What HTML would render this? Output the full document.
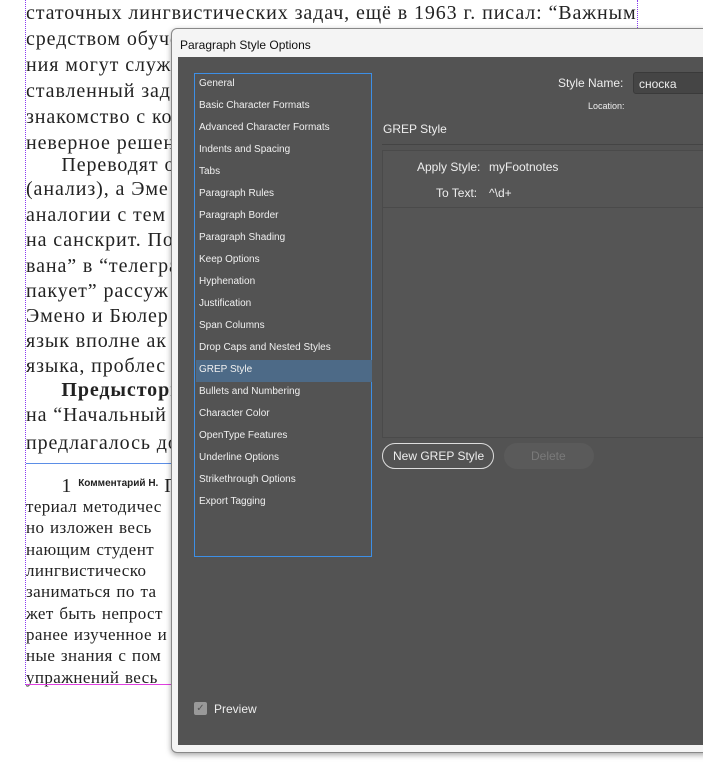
<!DOCTYPE html>
<html><head><meta charset="utf-8"><style>
*{margin:0;padding:0;box-sizing:border-box}
body{width:703px;height:763px;background:#fff;position:relative;overflow:hidden;font-family:"Liberation Sans",sans-serif}
.doc{position:absolute;left:26px;top:0;font-family:"Liberation Serif","DejaVu Serif",serif;color:#222}
.l{position:absolute;left:0;white-space:nowrap;font-size:20px;line-height:20px;letter-spacing:0.9px}
.f{position:absolute;left:0;white-space:nowrap;font-size:17px;line-height:17px;letter-spacing:0.4px;word-spacing:1px}
.vl{position:absolute;left:25px;top:0;height:685px;border-left:1px dotted #8a3cf0}
.dlg{position:absolute;left:171px;top:28px;width:540px;height:725px;background:#f4f4f4;border:1px solid #888;border-radius:6px;box-shadow:0 2px 6px rgba(0,0,0,.35)}
.title{position:absolute;left:8px;top:9px;font-size:12px;color:#111}
.body{position:absolute;left:178px;top:57px;width:525px;height:688px;background:#535353}
.list{position:absolute;left:194px;top:73px;width:178px;height:484px;border:1px solid #3d8fe6;background:#535353}
.it{position:absolute;left:4px;font-size:10px;color:#f0f0f0}
.sel{position:absolute;left:1px;width:176px;height:22px;top:286px;background:#4d6a87}
.t{position:absolute;color:#eee;font-size:12px;white-space:nowrap}
</style></head><body>
<div class="doc">
<div class="l" style="top:3px">статочных лингвистических задач, ещё в 1963 г. писал: “Важным</div>
<div class="l" style="top:29px">средством обучения</div>
<div class="l" style="top:55px">ния могут служить</div>
<div class="l" style="top:81px">ставленный задачи</div>
<div class="l" style="top:107px">знакомство с ко</div>
<div class="l" style="top:133px">неверное решение</div>
<div class="l" style="top:155px">&nbsp;&nbsp;&nbsp;&nbsp;&nbsp;&nbsp;Переводят о</div>
<div class="l" style="top:179px">(анализ), а Эме</div>
<div class="l" style="top:205px">аналогии с тем</div>
<div class="l" style="top:230px">на санскрит. По</div>
<div class="l" style="top:256px">вана” в “телегра</div>
<div class="l" style="top:281px">пакует” рассуж</div>
<div class="l" style="top:306px">Эмено и Бюлер</div>
<div class="l" style="top:331px">язык вполне ак</div>
<div class="l" style="top:356px">языка, проблес</div>
<div class="l" style="top:380px;font-weight:bold">&nbsp;&nbsp;&nbsp;&nbsp;&nbsp;&nbsp;Предыстори</div>
<div class="l" style="top:405px">на “Начальный</div>
<div class="l" style="top:433px">предлагалось до</div>
<div class="l" style="top:474px">&nbsp;&nbsp;&nbsp;&nbsp;&nbsp;&nbsp;1 <span style="font-family:'Liberation Sans';font-size:10px;font-weight:bold;vertical-align:6px;letter-spacing:0">Комментарий Н.</span> П.</div>
<div class="f" style="top:498px">териал методичес</div>
<div class="f" style="top:519px">но изложен весь</div>
<div class="f" style="top:541px">нающим студент</div>
<div class="f" style="top:562px">лингвистическо</div>
<div class="f" style="top:583px">заниматься по та</div>
<div class="f" style="top:605px">жет быть непрост</div>
<div class="f" style="top:626px">ранее изученное и</div>
<div class="f" style="top:647px">ные знания с пом</div>
<div class="f" style="top:669px">упражнений весь</div>
</div>
<div class="vl"></div>
<div style="position:absolute;left:26px;top:463px;width:150px;border-top:1px solid #5b8ee6"></div>
<div style="position:absolute;left:26px;top:684px;width:150px;border-top:1px solid #e040e0"></div>
<div style="position:absolute;left:637px;top:0;height:28px;border-left:1px dotted #8a3cf0"></div>
<div class="dlg"><div class="title">Paragraph Style Options</div></div>
<div class="body"></div>
<div class="list">
<div class="sel"></div>
<div class="it" style="top:4px">General</div>
<div class="it" style="top:26px">Basic Character Formats</div>
<div class="it" style="top:48px">Advanced Character Formats</div>
<div class="it" style="top:70px">Indents and Spacing</div>
<div class="it" style="top:92px">Tabs</div>
<div class="it" style="top:114px">Paragraph Rules</div>
<div class="it" style="top:136px">Paragraph Border</div>
<div class="it" style="top:158px">Paragraph Shading</div>
<div class="it" style="top:180px">Keep Options</div>
<div class="it" style="top:202px">Hyphenation</div>
<div class="it" style="top:224px">Justification</div>
<div class="it" style="top:246px">Span Columns</div>
<div class="it" style="top:268px">Drop Caps and Nested Styles</div>
<div class="it" style="top:290px">GREP Style</div>
<div class="it" style="top:312px">Bullets and Numbering</div>
<div class="it" style="top:334px">Character Color</div>
<div class="it" style="top:356px">OpenType Features</div>
<div class="it" style="top:378px">Underline Options</div>
<div class="it" style="top:400px">Strikethrough Options</div>
<div class="it" style="top:422px">Export Tagging</div>
</div>
<div class="t" style="left:558px;top:76px">Style Name:</div>
<div style="position:absolute;left:633px;top:72px;width:80px;height:22px;background:#454545;border:1px solid #3a3a3a;border-radius:3px"></div>
<div class="t" style="left:639px;top:77px;font-size:12px">сноска</div>
<div class="t" style="left:588px;top:101px;font-size:9px">Location:</div>
<div class="t" style="left:383px;top:122px">GREP Style</div>
<div style="position:absolute;left:382px;top:144px;width:330px;border-top:1px solid #444"></div>
<div style="position:absolute;left:382px;top:150px;width:330px;height:288px;border:1px solid #4a4a4a;background:#555"></div>
<div style="position:absolute;left:383px;top:207px;width:330px;border-top:1px solid #4a4a4a"></div>
<div class="t" style="left:417px;top:160px">Apply Style:</div>
<div class="t" style="left:489px;top:160px">myFootnotes</div>
<div class="t" style="left:436px;top:186px">To Text:</div>
<div class="t" style="left:489px;top:186px">^\d+</div>
<div style="position:absolute;left:382px;top:443px;width:112px;height:26px;border:1px solid #ddd;border-radius:13px"></div>
<div class="t" style="left:393px;top:449px">New GREP Style</div>
<div style="position:absolute;left:504px;top:443px;width:90px;height:26px;background:#5a5a5a;border-radius:13px"></div>
<div class="t" style="left:531px;top:449px;color:#7a7a7a">Delete</div>
<div style="position:absolute;left:194px;top:702px;width:13px;height:13px;background:#999;border-radius:2px;color:#555;font-size:10px;line-height:13px;text-align:center">✓</div>
<div class="t" style="left:214px;top:702px">Preview</div>
</body></html>
